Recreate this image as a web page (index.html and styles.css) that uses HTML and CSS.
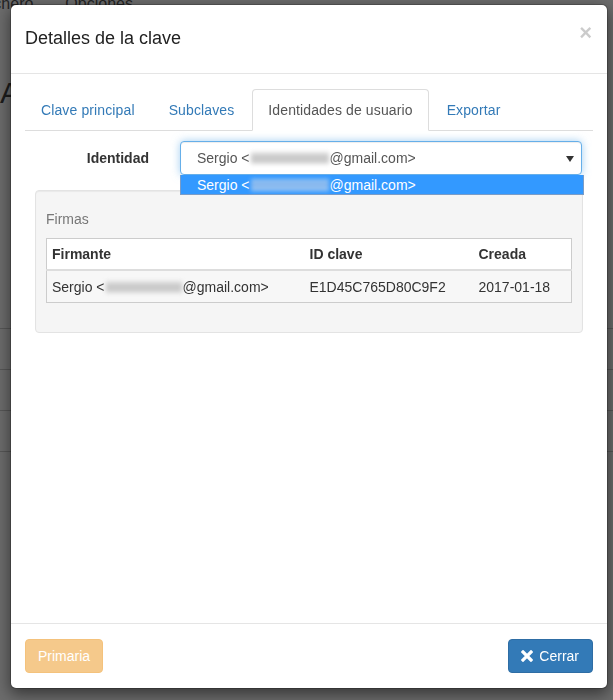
FILE: index.html
```html
<!DOCTYPE html>
<html lang="es">
<head>
<meta charset="utf-8">
<title>Detalles de la clave</title>
<link rel="stylesheet" href="styles.css">
</head>
<body>
<div class="page">
  <div class="menubar"><span class="menu-item">Fichero</span><span class="menu-item">Opciones</span></div>
  <div class="page-title">A</div>
  <div class="page-lines">
    <div class="pline"></div><div class="pline"></div><div class="pline"></div><div class="pline"></div>
  </div>
</div>
<div class="backdrop"></div>
<div class="modal-wrap">
  <div class="modal">
    <div class="modal-header">
      <h4 class="modal-title">Detalles de la clave</h4>
      <span class="close">×</span>
    </div>
    <div class="modal-body">
      <ul class="nav-tabs">
        <li class="tab"><a>Clave principal</a></li>
        <li class="tab"><a>Subclaves</a></li>
        <li class="tab active"><a>Identidades de usuario</a></li>
        <li class="tab"><a>Exportar</a></li>
      </ul>
      <div class="tab-content">
        <div class="form-row">
          <label class="form-label">Identidad</label>
          <div class="select-wrap">
            <div class="select">
              <span>Sergio &lt;</span><span class="blur blur-grey"></span><span>@gmail.com&gt;</span>
              <svg class="caret" width="8" height="6" viewBox="0 0 8 6"><path d="M0 0H8L4 6Z" fill="#333"/></svg>
            </div>
            <div class="dropdown">
              <span>Sergio &lt;</span><span class="blur blur-blue"></span><span>@gmail.com&gt;</span>
            </div>
          </div>
        </div>
        <div class="well">
          <div class="well-title">Firmas</div>
          <table class="sig-table">
            <thead>
              <tr><th>Firmante</th><th class="col-id">ID clave</th><th class="col-date">Creada</th></tr>
            </thead>
            <tbody>
              <tr>
                <td><span>Sergio &lt;</span><span class="blur blur-grey blur-table"></span><span>@gmail.com&gt;</span></td>
                <td>E1D45C765D80C9F2</td>
                <td>2017-01-18</td>
              </tr>
            </tbody>
          </table>
        </div>
      </div>
    </div>
    <div class="modal-footer">
      <button class="btn btn-warning">Primaria</button>
      <button class="btn btn-primary"><svg class="btn-icon" width="12" height="12" viewBox="0 0 12 12"><path d="M2 2L10 10M10 2L2 10" stroke="#fff" stroke-width="3.2" stroke-linecap="square"/></svg>Cerrar</button>
    </div>
  </div>
</div>
</body>
</html>
```
FILE: styles.css
```css
* { box-sizing: border-box; }
html, body { margin: 0; padding: 0; }
body {
  width: 613px;
  height: 700px;
  overflow: hidden;
  background: #fff;
  font-family: "Liberation Sans", Arial, sans-serif;
  font-size: 14px;
  line-height: 20px;
  color: #333;
}
.page { padding: 0; }
.menubar {
  display: flex;
  gap: 32px;
  margin-top: -6px;
  margin-left: -20px;
  font-size: 16px;
  line-height: 20px;
  color: #555;
}
.page-title {
  margin-top: 64px;
  font-size: 30px;
  line-height: 30px;
  color: #444;
}
.page-lines { margin-top: 220px; }
.pline { height: 1px; background: #ccc; margin-bottom: 40px; }

.backdrop {
  position: fixed;
  inset: 0;
  background: rgba(0, 0, 0, 0.58);
}
.modal-wrap {
  position: fixed;
  inset: 0;
  padding: 4px 5px 0 10px;
}
.modal {
  width: 598px;
  height: 685px;
  background: #fff;
  border: 1px solid rgba(0, 0, 0, 0.2);
  border-radius: 6px;
  box-shadow: 0 5px 15px rgba(0, 0, 0, 0.5);
  display: flex;
  flex-direction: column;
  background-clip: padding-box;
}
.modal-header {
  display: flex;
  justify-content: space-between;
  align-items: flex-start;
  padding: 20px 14px 22px 14px;
  border-bottom: 1px solid #e5e5e5;
}
.modal-title {
  margin: 0;
  font-size: 18px;
  font-weight: normal;
  line-height: 26px;
  color: #222;
}
.close {
  font-size: 22px;
  font-weight: bold;
  line-height: 1;
  color: #000;
  opacity: 0.2;
  margin-top: -3px;
  margin-right: 1px;
}
.modal-body {
  flex: 1;
  padding: 15px 14px;
}
.nav-tabs {
  list-style: none;
  margin: 0;
  padding: 0;
  display: flex;
  border-bottom: 1px solid #ddd;
}
.tab { margin-right: 2px; margin-bottom: -1px; }
.tab a {
  display: block;
  padding: 10px 15px;
  line-height: 20px;
  color: #337ab7;
  border: 1px solid transparent;
  border-radius: 4px 4px 0 0;
  letter-spacing: 0.12px;
}
.tab.active a {
  color: #555;
  background: #fff;
  border-color: #ddd #ddd transparent #ddd;
}
.tab-content { padding: 10px 10px 0; }
.form-row {
  display: grid;
  grid-template-columns: 130px 1fr;
  gap: 15px;
  align-items: center;
  margin-bottom: 15px;
}
.form-label {
  text-align: right;
  font-weight: bold;
  padding-right: 16px;
}
.select-wrap { position: relative; margin-right: 1px; }
.select {
  position: relative;
  height: 34px;
  display: flex;
  align-items: center;
  padding: 0 16px;
  border: 1px solid #66afe9;
  border-radius: 4px;
  box-shadow: inset 0 1px 1px rgba(0, 0, 0, 0.075), 0 0 8px rgba(102, 175, 233, 0.6);
  color: #555;
  background: #fff;
}
.caret { position: absolute; right: 7px; top: 14px; }
.dropdown {
  position: absolute;
  left: 0;
  right: -2px;
  top: 34px;
  height: 20px;
  padding: 0 16px;
  display: flex;
  align-items: center;
  background: #3399ff;
  color: #fff;
  border: 1px solid #7a9cc7;
  border-top: none;
  z-index: 2;
}
.blur {
  display: inline-block;
  width: 78px;
  height: 12px;
  margin: 0 1px 0 1px;
  filter: blur(2px);
}
.blur-grey { background: linear-gradient(#e2e2e2, #c4c4c4 50%, #d8d8d8); }
.blur-blue { background: linear-gradient(#9cc6f2, #7fb3ee 50%, #a8ccf3); }
.blur-table { width: 76px; }
.well {
  background: #f5f5f5;
  border: 1px solid #e3e3e3;
  border-radius: 4px;
  padding: 18px 10px 29px;
  box-shadow: inset 0 1px 1px rgba(0, 0, 0, 0.05);
}
.well-title {
  color: #777;
  line-height: 20px;
  margin-bottom: 9px;
}
.sig-table {
  width: 100%;
  border-collapse: collapse;
  border: 1px solid #ccc;
  background: #fff;
}
.sig-table th, .sig-table td {
  text-align: left;
  padding: 5px 5px;
  line-height: 20px;
}
.sig-table th { border-bottom: 2px solid #ddd; font-weight: bold; color: #333; }
.sig-table td { background: #f7f7f7; color: #333; }
.sig-table td:first-child span { vertical-align: middle; }
.col-id { width: 169px; }
.col-date { width: 98px; }
.modal-footer {
  display: flex;
  justify-content: space-between;
  padding: 15px 14px;
  border-top: 1px solid #e5e5e5;
}
.btn {
  height: 34px;
  padding: 6px 12px;
  font-family: inherit;
  font-size: 14px;
  line-height: 20px;
  border: 1px solid transparent;
  border-radius: 4px;
  color: #fff;
  display: flex;
  align-items: center;
}
.btn-warning {
  background: #f0ad4e;
  border-color: #eea236;
  opacity: 0.65;
}
.btn-primary {
  background: #337ab7;
  border-color: #2e6da4;
  padding: 6px 13px 6px 12px;
}
.btn-icon { margin-right: 6px; }
```
